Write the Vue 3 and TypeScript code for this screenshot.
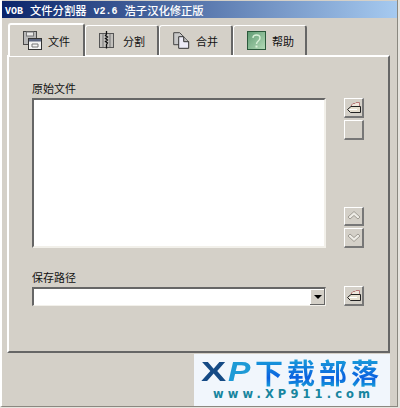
<script setup lang="ts">
const tabs = [
  { label: '文件', icon: 'file' },
  { label: '分割', icon: 'split' },
  { label: '合并', icon: 'merge' },
  { label: '帮助', icon: 'help' },
]
</script>

<template>
  <div class="window">
    <div class="titlebar">
      <span class="t-latin">VOB</span>
      <span class="t-cn">文件分割器</span>
      <span class="t-latin">v2.6</span>
      <span class="t-cn">浩子汉化修正版</span>
    </div>
    <div class="tabs">
      <div v-for="(t, i) in tabs" :key="t.label" :class="['tab', { active: i === 0 }]">
        <svg v-if="t.icon === 'file'" class="tab-icon" width="19" height="19" viewBox="0 0 19 19">
          <rect x="0.5" y="0.5" width="13" height="13" fill="#b8b8b8" stroke="#4a4a4a" />
          <rect x="3.5" y="1" width="7" height="4" fill="#e8e8e8" stroke="#777" />
          <rect x="5.5" y="7.5" width="13" height="11" fill="#f4f4f4" stroke="#333" />
          <rect x="6" y="8" width="12" height="2.5" fill="#5a6480" />
          <path d="M9 13h6v3H9z" fill="none" stroke="#777" />
        </svg>
        <svg v-else-if="t.icon === 'split'" class="tab-icon" width="18" height="19" viewBox="0 0 18 19">
          <rect x="0.5" y="2.5" width="14" height="14" fill="#c2c0bc" stroke="#555" />
          <path d="M4 3v13M11 3v13" stroke="#777" />
          <path d="M7.5 0v3l-1 1.5 2 1.5-2 1.5 2 1.5-2 1.5 2 1.5-1 1.5v4" stroke="#111" stroke-width="1.3" fill="none" />
        </svg>
        <svg v-else-if="t.icon === 'merge'" class="tab-icon" width="17" height="17" viewBox="0 0 17 17">
          <path d="M0.7 0.7h6l3 3v9h-9z" fill="#c8c8c8" stroke="#444" />
          <path d="M5.7 4.7h5l5 5v6.6h-10z" fill="#ecebf6" stroke="#333" />
          <path d="M10.7 4.7v5h5" fill="#bbb" stroke="#333" />
        </svg>
        <svg v-else class="tab-icon" width="19" height="19" viewBox="0 0 19 19">
          <defs>
            <linearGradient id="helpBg" x1="0" y1="0" x2="1" y2="1">
              <stop offset="0" stop-color="#5f9a72" />
              <stop offset="1" stop-color="#b4dcb8" />
            </linearGradient>
          </defs>
          <rect x="0.5" y="0.5" width="18" height="18" fill="url(#helpBg)" stroke="#2c5a3c" />
          <path d="M6 7c0-4 7-4 7 0 0 3-3.500 3-3.500 6" fill="none" stroke="#d8f0d8" stroke-width="1.4" />
          <rect x="8.500" y="14.500" width="2" height="2" fill="#d8f0d8" />
        </svg>
        <span class="tab-label">{{ t.label }}</span>
      </div>
    </div>
    <div class="panel">
      <div class="main-row">
        <div class="field">
          <div class="label">原始文件</div>
          <div class="listbox"></div>
        </div>
        <div class="side">
          <div class="btn">
            <svg width="14" height="11" viewBox="0 0 14 11">
              <path d="M4.500 5V3L6 1.500h2l1-1h3.500V5" fill="#efe6dc" stroke="#b87a7a" />
              <path d="M4 4.500h9.500v6H3.500L0.500 7.500z" fill="#e6dfd0" stroke="#222" />
              <path d="M2 7.500h8" stroke="#fff" />
            </svg>
          </div>
          <div class="btn"></div>
          <div class="spacer"></div>
          <div class="btn">
            <svg width="14" height="11" viewBox="0 0 14 11">
              <path d="M1 7l6-5.500 6 5.500-2 2-4-3.500-4 3.500z" fill="#eeece6" stroke="#a09c94" />
            </svg>
          </div>
          <div class="btn">
            <svg width="14" height="11" viewBox="0 0 14 11">
              <path d="M1 4l6 5.500 6-5.500-2-2-4 3.500-4-3.500z" fill="#eeece6" stroke="#a09c94" />
            </svg>
          </div>
        </div>
      </div>
      <div class="save-row">
        <div class="field">
          <div class="label">保存路径</div>
          <div class="combo">
            <div class="combo-arrow"><span class="arrow"></span></div>
          </div>
        </div>
        <div class="side-end">
          <div class="btn">
            <svg width="14" height="11" viewBox="0 0 14 11">
              <path d="M4.500 5V3L6 1.500h2l1-1h3.500V5" fill="#efe6dc" stroke="#b87a7a" />
              <path d="M4 4.500h9.500v6H3.500L0.500 7.500z" fill="#e6dfd0" stroke="#222" />
              <path d="M2 7.500h8" stroke="#fff" />
            </svg>
          </div>
        </div>
      </div>
    </div>
    <div class="watermark">
      <div class="wm-top">
        <span class="wm-x">X</span><span class="wm-p">P</span><span class="wm-cn">下载部落</span>
      </div>
      <div class="wm-url">www.XP911.com</div>
    </div>
  </div>
</template>

<style scoped>
.window {
  position: relative;
  width: 398px;
  height: 407px;
  box-sizing: border-box;
  background: #d4d0c8;
  border-left: 2px solid #fff;
  border-right: 1px solid #8a8880;
  border-bottom: 1px solid #8a8880;
  padding-top: 1px;
  overflow: hidden;
  font-family: "Noto Sans CJK SC", "Liberation Sans", sans-serif;
  color: #111;
}
.titlebar {
  height: 17px;
  background: linear-gradient(90deg, #0a246a, #a6caf0);
  display: flex;
  align-items: center;
  gap: 7px;
  padding-left: 3px;
  color: #fff;
  white-space: nowrap;
}
.t-latin {
  font-family: "Liberation Mono", monospace;
  font-weight: 700;
  font-size: 10px;
  margin-top: 3px;
}
.t-cn {
  font-size: 11.3px;
  font-weight: 500;
}
.tabs {
  display: flex;
  margin: 5px 0 0 6px;
  height: 32px;
  align-items: flex-end;
  position: relative;
  z-index: 1;
}
.tab {
  width: 74px;
  height: 30px;
  box-sizing: border-box;
  display: flex;
  align-items: center;
  gap: 6px;
  background: #d4d0c8;
  border-top: 1px solid #fff;
  border-left: 1px solid #fff;
  border-right: 2px solid #666;
  border-radius: 3px 3px 0 0;
  padding-left: 13px;
}
.tab.active {
  width: 77px;
  height: 33px;
  margin-bottom: -1px;
  border-left-width: 2px;
  border-top-width: 2px;
}
.tab-icon {
  flex: none;
}
.tab-label {
  font-size: 11px;
}
.panel {
  width: 383px;
  height: 298px;
  margin-left: 5px;
  box-sizing: border-box;
  border-top: 2px solid #fff;
  border-left: 2px solid #fff;
  border-right: 2px solid #666;
  border-bottom: 2px solid #666;
  padding: 23px 24px 0 23px;
  display: flex;
  flex-direction: column;
}
.main-row,
.save-row {
  display: flex;
  gap: 18px;
}
.main-row {
  height: 168px;
}
.save-row {
  margin-top: 21px;
}
.field {
  width: 294px;
  display: flex;
  flex-direction: column;
}
.label {
  font-size: 11px;
  line-height: 16px;
  height: 18px;
}
.listbox {
  flex: 1;
  background: #fff;
  border-top: 2px solid #666;
  border-left: 2px solid #666;
  border-right: 2px solid #f2f0ea;
  border-bottom: 2px solid #f2f0ea;
}
.combo {
  height: 19px;
  box-sizing: border-box;
  background: #fff;
  border-top: 2px solid #666;
  border-left: 2px solid #666;
  border-right: 1px solid #f2f0ea;
  border-bottom: 1px solid #f2f0ea;
  display: flex;
  justify-content: flex-end;
}
.combo-arrow {
  width: 15px;
  background: #d4d0c8;
  box-shadow: inset -1px -1px 0 #666, inset 1px 1px 0 #fff;
  display: flex;
  align-items: center;
  justify-content: center;
}
.arrow {
  border-left: 4px solid transparent;
  border-right: 4px solid transparent;
  border-top: 4px solid #000;
}
.side {
  display: flex;
  flex-direction: column;
  padding-top: 18px;
  gap: 2px;
}
.side-end {
  display: flex;
  align-items: flex-end;
}
.spacer {
  height: 64px;
}
.btn {
  width: 20px;
  height: 20px;
  box-sizing: border-box;
  background: #d4d0c8;
  border-top: 1px solid #fff;
  border-left: 1px solid #fff;
  border-right: 2px solid #777;
  border-bottom: 2px solid #777;
  display: flex;
  align-items: center;
  justify-content: center;
}
.watermark {
  position: absolute;
  left: 192px;
  top: 354px;
  width: 196px;
  height: 52px;
  background: #f1f6fc;
}
.wm-top {
  display: flex;
  align-items: center;
  height: 30px;
  margin-top: 3px;
  padding-left: 7px;
  line-height: 30px;
}
.wm-x {
  width: 27px;
  font-family: "Liberation Sans", sans-serif;
  font-weight: 700;
  font-size: 28px;
  color: #154a85;
  transform: scaleX(1.35);
  transform-origin: left center;
}
.wm-p {
  width: 27px;
  font-family: "Liberation Sans", sans-serif;
  font-style: italic;
  font-size: 28px;
  font-weight: 700;
  color: #1e9ad6;
  transform: scaleX(1.2);
  transform-origin: left center;
}
.wm-cn {
  font-family: "Noto Sans CJK SC", sans-serif;
  font-weight: 700;
  font-size: 28px;
  letter-spacing: 4px;
  white-space: nowrap;
  background: linear-gradient(180deg, #1aa4d8, #0a5fe0 70%, #18a0d8);
  -webkit-background-clip: text;
  background-clip: text;
  color: transparent;
}
.wm-url {
  padding-left: 19px;
  font-family: "DejaVu Sans", sans-serif;
  font-weight: 700;
  font-size: 11.5px;
  letter-spacing: 4.1px;
  color: #17859f;
  line-height: 14px;
  white-space: nowrap;
}
</style>

<style>
html, body { margin: 0; background: #e6e4de; }
</style>
